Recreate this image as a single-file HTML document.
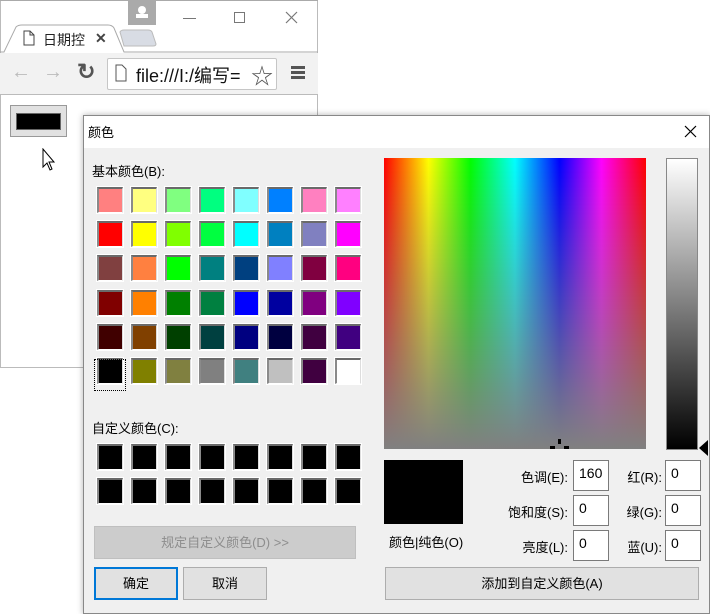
<!DOCTYPE html><html><head><meta charset="utf-8"><style>
*{box-sizing:border-box;margin:0;padding:0}
body{width:710px;height:614px;background:#fff;position:relative;overflow:hidden;font-family:"Liberation Sans","Noto Sans CJK SC",sans-serif;font-size:13px;color:#000}
.a{position:absolute}
.sw{position:absolute;width:26px;height:26px;border-top:2px solid #6a6a6a;border-left:2px solid #8a8a8a;border-right:1px solid #ddd;border-bottom:1px solid #fff;outline:1px solid #fff}
.inp{position:absolute;width:36px;height:31px;background:#fff;border:1px solid #7a7a7a;padding:4px 5px;font-size:14px}
.lbl{position:absolute;font-size:13px;text-align:right}
.btn{position:absolute;background:#e1e1e1;border:1px solid #adadad;text-align:center;font-size:13px}
</style></head><body>
<!-- browser -->
<div class="a" style="left:0;top:0;width:318px;height:368px;border:1px solid #bbb;border-top:none;background:#fff"></div>
<div class="a" style="left:0;top:0;width:318px;height:1px;background:#aaa"></div>
<div class="a" style="left:128px;top:0;width:28px;height:25px;background:#aaa"></div>
<div class="a" style="left:138px;top:6px;width:8px;height:8px;border-radius:50%;background:#fff"></div>
<div class="a" style="left:136px;top:14px;width:12px;height:4px;background:#fff"></div>
<div class="a" style="left:183px;top:18px;width:13px;height:1px;background:#777"></div>
<div class="a" style="left:234px;top:12px;width:11px;height:11px;border:1px solid #777"></div>
<svg class="a" style="left:285px;top:11px" width="13" height="13"><path d="M1 1L12 12M12 1L1 12" stroke="#777" stroke-width="1.2"/></svg>
<svg class="a" style="left:0;top:24px" width="318" height="30"><path d="M0 28H4L16 3Q18 1 22 1H108Q112 1 114 4L124 28H318" fill="#fff" stroke="#aaa"/><path d="M120 8Q121 6 124 6H148Q151 6 152 8L156 20Q156 22 153 22H124Z" fill="#d8dce4" stroke="#bbb"/></svg>
<svg class="a" style="left:23px;top:30px" width="12" height="16"><path d="M1 1H7L11 5V15H1Z M7 1V5H11" fill="#fff" stroke="#444"/></svg>
<div class="a" style="left:43px;top:30px;font-size:14px;color:#222">日期控</div>
<div class="a" style="left:95px;top:30px;font-size:14px;font-weight:bold;color:#444">✕</div>
<div class="a" style="left:0;top:53px;width:318px;height:42px;background:#f2f2f2;border-bottom:1px solid #bbb"></div>
<div class="a" style="left:11px;top:61px;font-size:20px;color:#bbb">←</div>
<div class="a" style="left:43px;top:61px;font-size:20px;color:#bbb">→</div>
<div class="a" style="left:77px;top:59px;font-size:22px;font-weight:bold;color:#555">↻</div>
<div class="a" style="left:107px;top:58px;width:170px;height:32px;background:#fff;border:1px solid #c6c6c6;border-radius:2px"></div>
<svg class="a" style="left:115px;top:64px" width="12" height="18"><path d="M1 1H7L11 5V17H1Z" fill="#fff" stroke="#555"/></svg>
<div class="a" style="left:136px;top:62px;font-size:18px;color:#111;white-space:nowrap;width:118px;overflow:hidden">file:///I:/编写=</div>
<div class="a" style="left:251px;top:59px;font-size:22px;color:#555">☆</div>
<div class="a" style="left:291px;top:66px;width:14px;height:3px;background:#555;box-shadow:0 5px #555,0 10px #555"></div>
<div class="a" style="left:10px;top:105px;width:57px;height:32px;background:#e1e1e1;border:1px solid #999"></div>
<div class="a" style="left:16px;top:113px;width:45px;height:17px;background:#000;border:1px solid #666"></div>
<svg class="a" style="left:42px;top:148px" width="14" height="24"><path d="M1 1V19L5 15L8 22L10 21L7 14H12Z" fill="#fff" stroke="#000"/></svg>
<!-- dialog -->
<div class="a" style="left:83px;top:115px;width:627px;height:499px;background:#f0f0f0;border:1px solid #888;box-shadow:0 0 6px rgba(0,0,0,.3)"></div>
<div class="a" style="left:84px;top:116px;width:625px;height:32px;background:#fff"></div>
<div class="a" style="left:88px;top:122px;font-size:13px">颜色</div>
<svg class="a" style="left:684px;top:125px" width="13" height="13"><path d="M1 1L12 12M12 1L1 12" stroke="#000" stroke-width="1.2"/></svg>
<div class="a" style="left:92px;top:161px">基本颜色(B):</div>
<div id="basic"></div>
<div class="a" style="left:92px;top:418px">自定义颜色(C):</div>
<div id="cust"></div>
<div class="a" style="left:94px;top:359px;width:32px;height:32px;border:1px dotted #000"></div>
<div class="btn" style="left:94px;top:526px;width:262px;height:33px;background:#cccccc;border-color:#bfbfbf;color:#8d8d8d;line-height:31px">规定自定义颜色(D) &gt;&gt;</div>
<div class="btn" style="left:94px;top:567px;width:84px;height:33px;border:2px solid #0078d7;line-height:29px">确定</div>
<div class="btn" style="left:183px;top:567px;width:84px;height:33px;line-height:31px">取消</div>
<!-- spectrum -->
<div class="a" style="left:384px;top:158px;width:262px;height:291px;background:linear-gradient(to right,#f00,#ff0 17%,#0f0 33%,#0ff 50%,#00f 67%,#f0f 83%,#f00)"></div>
<div class="a" style="left:384px;top:158px;width:262px;height:291px;background:linear-gradient(to bottom,rgba(128,128,128,0),rgba(128,128,128,1))"></div>
<div class="a" style="left:558px;top:439px;width:3px;height:5px;background:#000"></div>
<div class="a" style="left:550px;top:446px;width:5px;height:3px;background:#000"></div>
<div class="a" style="left:564px;top:446px;width:5px;height:3px;background:#000"></div>
<div class="a" style="left:666px;top:158px;width:32px;height:292px;border:1px solid #888;background:linear-gradient(#fff,#000)"></div>
<svg class="a" style="left:698px;top:440px" width="10" height="16"><path d="M10 0V16L1 8Z" fill="#000"/></svg>
<div class="a" style="left:384px;top:460px;width:79px;height:64px;background:#000"></div>
<div class="a" style="left:389px;top:532px">颜色|纯色(O)</div>
<div class="lbl" style="left:490px;top:467px;width:78px">色调(E):</div>
<div class="lbl" style="left:490px;top:502px;width:78px">饱和度(S):</div>
<div class="lbl" style="left:490px;top:537px;width:78px">亮度(L):</div>
<div class="inp" style="left:573px;top:460px">160</div>
<div class="inp" style="left:573px;top:495px">0</div>
<div class="inp" style="left:573px;top:530px">0</div>
<div class="lbl" style="left:620px;top:467px;width:42px">红(R):</div>
<div class="lbl" style="left:620px;top:502px;width:42px">绿(G):</div>
<div class="lbl" style="left:620px;top:537px;width:42px">蓝(U):</div>
<div class="inp" style="left:665px;top:460px">0</div>
<div class="inp" style="left:665px;top:495px">0</div>
<div class="inp" style="left:665px;top:530px">0</div>
<div class="btn" style="left:385px;top:567px;width:314px;height:33px;line-height:31px">添加到自定义颜色(A)</div>
<script>
var c=["#ff8080","#ffff80","#80ff80","#00ff80","#80ffff","#0080ff","#ff80c0","#ff80ff",
"#ff0000","#ffff00","#80ff00","#00ff40","#00ffff","#0080c0","#8080c0","#ff00ff",
"#804040","#ff8040","#00ff00","#008080","#004080","#8080ff","#800040","#ff0080",
"#800000","#ff8000","#008000","#008040","#0000ff","#0000a0","#800080","#8000ff",
"#400000","#804000","#004000","#004040","#000080","#000040","#400040","#400080",
"#000000","#808000","#808040","#808080","#408080","#c0c0c0","#400040","#ffffff"];
var h="";
for(var i=0;i<48;i++){var r=Math.floor(i/8),k=i%8;h+='<div class="sw" style="left:'+(97+k*34)+'px;top:'+(187+r*34.2)+'px;background:'+c[i]+'"></div>';}
document.getElementById("basic").outerHTML=h;
h="";
for(var i=0;i<16;i++){var r=Math.floor(i/8),k=i%8;h+='<div class="sw" style="left:'+(97+k*34)+'px;top:'+(444+r*34)+'px;background:#000"></div>';}
document.getElementById("cust").outerHTML=h;
</script>
</body></html>
